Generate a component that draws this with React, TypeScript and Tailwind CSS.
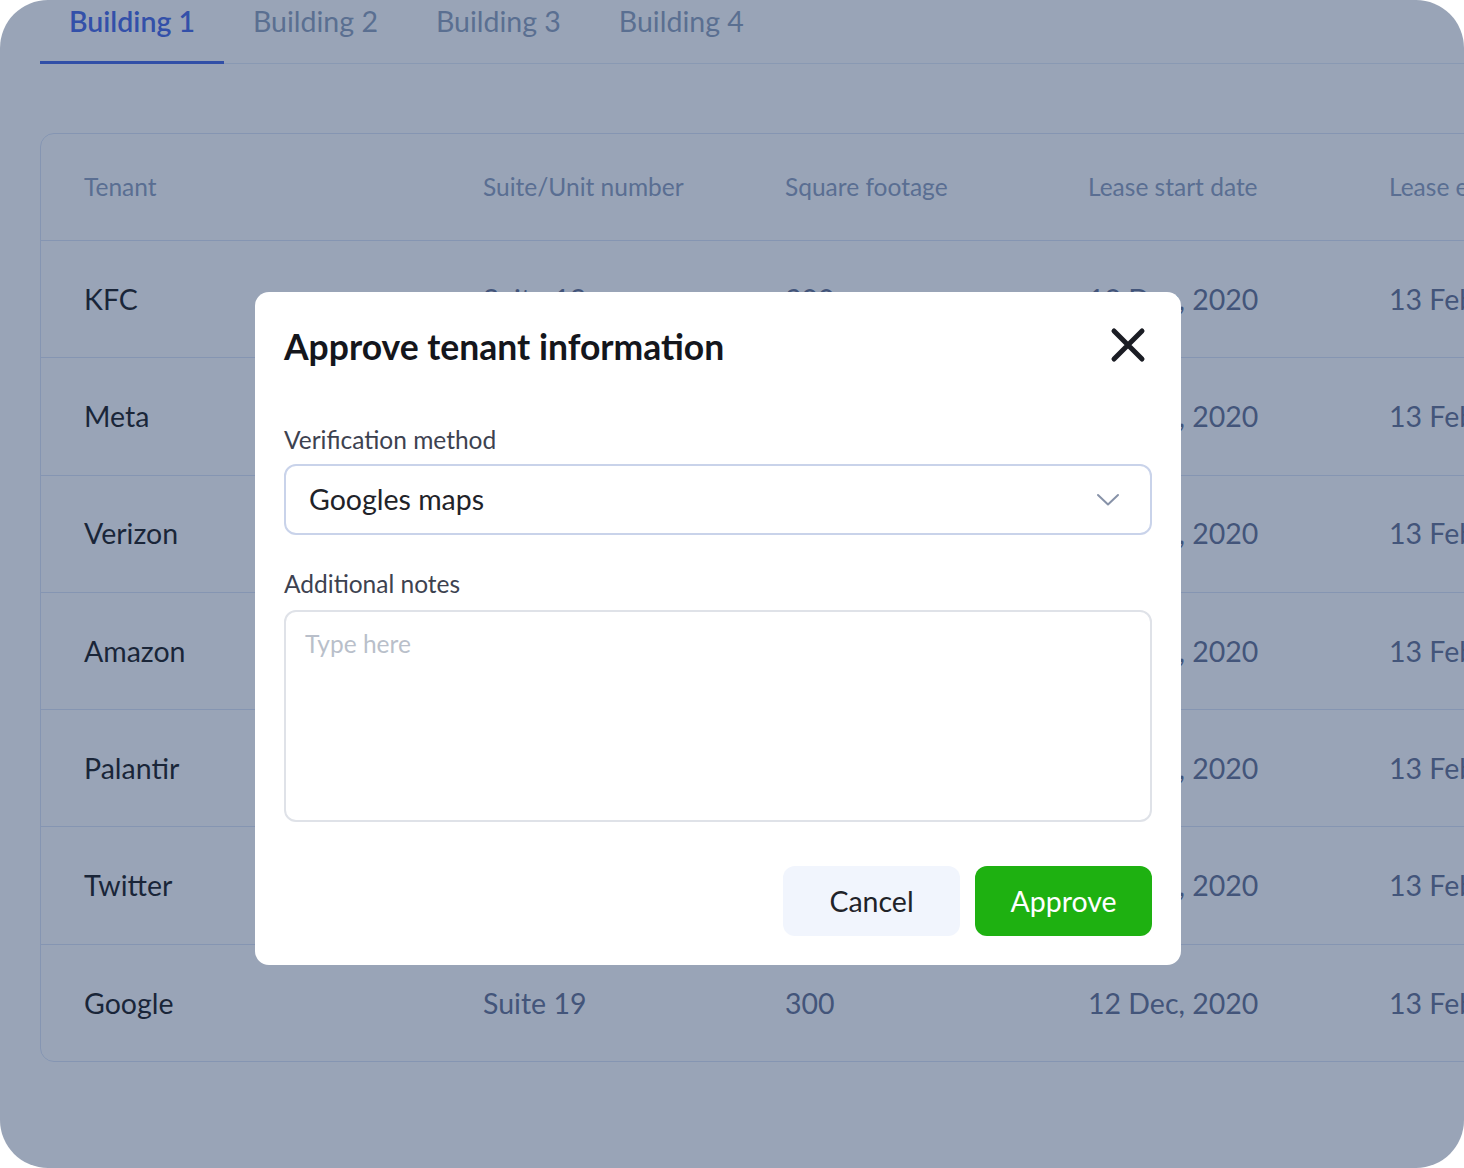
import { useState } from "react";

const tenants = ["KFC", "Meta", "Verizon", "Amazon", "Palantir", "Twitter", "Google"];
const tabs = ["Building 1", "Building 2", "Building 3", "Building 4"];

export default function App() {
  const [tab, setTab] = useState(0);
  const [method] = useState("Googles maps");
  const [notes, setNotes] = useState("");

  return (
    <div className="w-[1464px] h-[1168px] bg-white font-['Lato','Liberation_Sans',sans-serif]">
      <div className="relative w-full h-full rounded-[48px] overflow-hidden bg-white">
        {/* page behind the dialog */}
        <div className="pl-10 pt-[4px]">
          <div className="flex border-b border-[#dfe8f7]">
            {tabs.map((t, i) => (
              <button
                key={t}
                onClick={() => setTab(i)}
                className={`px-[29px] pb-[23px] -mb-px text-[28.5px] leading-[34px] border-b-[3px] ${
                  tab === i
                    ? "border-[#2f55de] text-[#3257e3] font-semibold"
                    : "border-transparent text-[#8194b2]"
                }`}
              >
                {t}
              </button>
            ))}
          </div>

          <div className="mt-[69px] w-[1700px] rounded-[14px] border border-[#d6e1f5]">
            <div className="flex items-center h-[106px] pl-[43px] text-[24.5px] text-[#8092b4]">
              <div className="w-[399px]">Tenant</div>
              <div className="w-[302px]">Suite/Unit number</div>
              <div className="w-[303px]">Square footage</div>
              <div className="w-[301px]">Lease start date</div>
              <div>Lease end date</div>
            </div>
            {tenants.map((name) => (
              <div
                key={name}
                className="flex items-center h-[117.3px] pl-[43px] border-t border-[#d6e1f5] text-[28.5px]"
              >
                <div className="w-[399px] text-black">{name}</div>
                <div className="w-[302px] text-[#526085]">Suite 19</div>
                <div className="w-[303px] text-[#526085]">300</div>
                <div className="w-[301px] text-[#526085]">12 Dec, 2020</div>
                <div className="text-[#526085]">13 Feb, 2021</div>
              </div>
            ))}
          </div>
        </div>

        {/* backdrop */}
        <div className="absolute inset-0 bg-[#344a6f]/50" />

        {/* dialog */}
        <div className="absolute left-[255px] top-[292px] w-[926px] rounded-[14px] bg-white px-[29px] pt-[33px] pb-[29px]">
          <div className="flex items-center justify-between">
            <h2 className="text-[35.5px] leading-[44px] font-bold text-[#14161c]">
              Approve tenant information
            </h2>
            <button className="mr-[6px] mt-[-4px]">
              <svg width="36" height="36" viewBox="0 0 36 36" fill="none">
                <path
                  d="M4 4L32 32M32 4L4 32"
                  stroke="#1b1d24"
                  strokeWidth="5"
                  strokeLinecap="round"
                />
              </svg>
            </button>
          </div>

          <label className="block mt-[56px] text-[24.5px] leading-[30px] text-[#3d4250]">
            Verification method
          </label>
          <div className="mt-[9px] flex items-center justify-between h-[71px] rounded-[12px] border-2 border-[#c9d3ea] pl-[23px] pr-[30px]">
            <span className="text-[28.5px] text-[#1f2329]">{method}</span>
            <svg width="24" height="14" viewBox="0 0 24 14" fill="none">
              <path
                d="M2 2L12 11.5L22 2"
                stroke="#8792a8"
                strokeWidth="2"
                strokeLinecap="round"
                strokeLinejoin="round"
              />
            </svg>
          </div>

          <label className="block mt-[34px] text-[24.5px] leading-[30px] text-[#3d4250]">
            Additional notes
          </label>
          <textarea
            value={notes}
            onChange={(e) => setNotes(e.target.value)}
            placeholder="Type here"
            className="mt-[11px] block w-full h-[212px] resize-none rounded-[12px] border-2 border-[#dfe2e8] px-[19px] py-[16px] text-[24.5px] leading-[32px] text-[#1f2329] placeholder:text-[#b9bfca] outline-none"
          />

          <div className="mt-[44px] flex justify-end gap-[15px]">
            <button className="w-[177px] h-[70px] rounded-[12px] bg-[#f1f5fd] text-[28.5px] text-[#1f2329]">
              Cancel
            </button>
            <button className="w-[177px] h-[70px] rounded-[12px] bg-[#1eb111] text-[28.5px] text-white">
              Approve
            </button>
          </div>
        </div>
      </div>
    </div>
  );
}
